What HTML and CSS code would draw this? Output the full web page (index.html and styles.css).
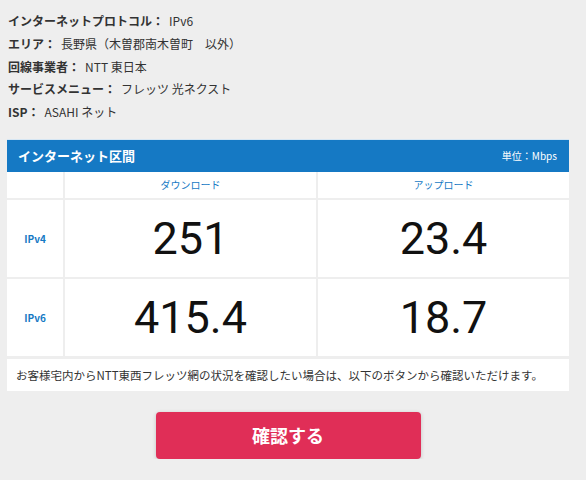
FILE: index.html
```html
<!DOCTYPE html>
<html lang="ja">
<head>
  <meta charset="UTF-8" />
  <title>回線速度</title>
  <link rel="stylesheet" href="styles.css">
</head>
<body>
  <div class="wrap">
    <ul class="info">
      <li><span class="label">インターネットプロトコル：</span>IPv6</li>
      <li><span class="label">エリア：</span>長野県（木曽郡南木曽町　以外）</li>
      <li><span class="label">回線事業者：</span>NTT 東日本</li>
      <li><span class="label">サービスメニュー：</span>フレッツ 光ネクスト</li>
      <li><span class="label">ISP：</span>ASAHI ネット</li>
    </ul>

    <div class="panel-head">
      <h2>インターネット区間</h2>
      <span class="unit">単位：Mbps</span>
    </div>
    <div class="speed">
      <div class="cell"></div>
      <div class="cell col-head">ダウンロード</div>
      <div class="cell col-head">アップロード</div>

      <div class="cell row-head">IPv4</div>
      <div class="cell num">251</div>
      <div class="cell num">23.4</div>

      <div class="cell row-head">IPv6</div>
      <div class="cell num">415.4</div>
      <div class="cell num">18.7</div>
    </div>
    <p class="note">お客様宅内からNTT東西フレッツ網の状況を確認したい場合は、以下のボタンから確認いただけます。</p>

    <div class="actions">
      <button class="confirm">確認する</button>
    </div>
  </div>
</body>
</html>
```

FILE: styles.css
```css
body {
  margin: 0;
  background: #eeeeee;
  font-family: "Noto Sans CJK JP", "Noto Sans", sans-serif;
  color: #333;
}
.wrap {
  width: 562px;
  padding: 10px 0 0 7px;
}
.info {
  list-style: none;
  margin: 0 0 15px 1px;
  padding: 0;
  font-size: 12px;
}
.info li {
  line-height: 22.8px;
}
.label {
  font-weight: bold;
  margin-right: 5px;
}

.panel-head {
  background: #1579c4;
  height: 32px;
  padding: 0 12px 0 11px;
  display: flex;
  align-items: center;
  justify-content: space-between;
  color: white;
  border-top: 1px solid #d6e6f3;
}
.panel-head h2 {
  margin: 0;
  font-size: 13px;
  font-weight: bold;
}
.unit { font-size: 10px; }

.speed {
  display: grid;
  grid-template-columns: 56px 1fr 1fr;
  grid-template-rows: 26px 77px 77px;
  gap: 2px;
  background: #eeeeee;
}
.cell {
  background: white;
  display: flex;
  align-items: center;
  justify-content: center;
}
.col-head {
  color: #1579c4;
  font-size: 10px;
}
.row-head {
  color: #1579c4;
  font-size: 10px;
  font-weight: bold;
}
.num {
  font-family: Roboto, "Liberation Sans", sans-serif;
  font-size: 45px;
  color: #111;
}
.note {
  margin: 3px 0 0;
  background: white;
  height: 32px;
  line-height: 32px;
  padding: 0 9px;
  font-size: 11.5px;
  white-space: nowrap;
  overflow: hidden;
}
.actions {
  display: flex;
  justify-content: center;
  margin-top: 21px;
}
.confirm {
  width: 265px;
  height: 47px;
  border: none;
  border-radius: 4px;
  background: #e02e57;
  color: white;
  font-family: "Noto Sans CJK JP", sans-serif;
  font-size: 18px;
  font-weight: bold;
  box-shadow: 0 1px 4px rgba(0,0,0,0.18);
  cursor: pointer;
}
```
